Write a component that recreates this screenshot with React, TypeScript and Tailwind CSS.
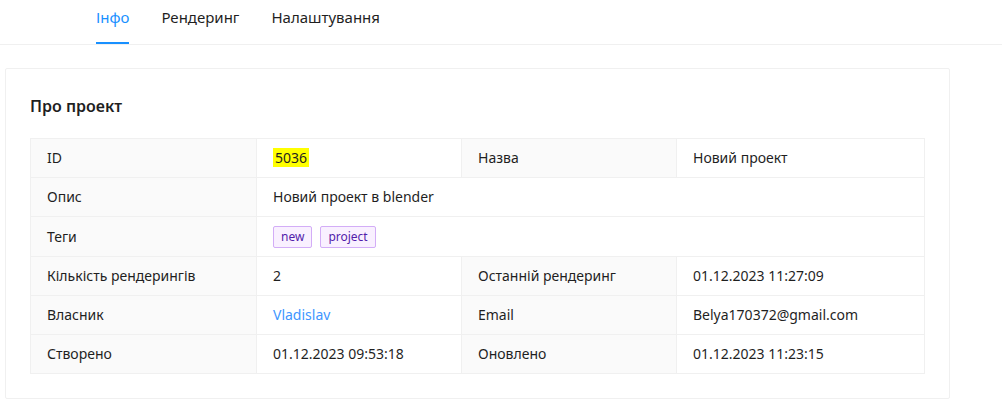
const tabs = ["Інфо", "Рендеринг", "Налаштування"];

function Label({ children }: { children: React.ReactNode }) {
  return (
    <th className="border border-[#f0f0f0] bg-[#fafafa] px-4 py-2 text-left font-normal text-[#1f1f1f] leading-[22px]">
      {children}
    </th>
  );
}

function Value({ children, span }: { children: React.ReactNode; span?: number }) {
  return (
    <td colSpan={span} className="border border-[#f0f0f0] px-4 py-2 text-[#1f1f1f] leading-[22px]">
      {children}
    </td>
  );
}

function Tag({ text }: { text: string }) {
  return (
    <span className="mr-2 inline-block h-[22px] rounded-[2px] border border-[#d3adf7] bg-[#f9f0ff] px-[7px] text-xs leading-5 text-[#531dab]">
      {text}
    </span>
  );
}

export default function App() {
  return (
    <div className="min-h-[410px] bg-white text-sm font-['Noto_Sans',sans-serif] text-[#1f1f1f]">
      <div className="flex gap-8 border-b border-[#f0f0f0] pl-24">
        {tabs.map((t, i) => (
          <div
            key={t}
            className={
              i === 0
                ? "h-[44px] border-b-2 border-[#1890ff] pt-[6px] text-[15px] leading-[22px] text-[#1890ff]"
                : "h-[44px] pt-[6px] text-[15px] leading-[22px] text-[#1f1f1f]"
            }
          >
            {t}
          </div>
        ))}
      </div>

      <div className="ml-[5px] mt-[23px] w-[945px] rounded-[2px] border border-[#f0f0f0] px-6 pt-6 pb-6">
        <h2 className="mb-5 pt-px text-base font-semibold leading-6 text-[#1f1f1f]">Про проект</h2>
        <table className="w-full table-fixed border-collapse border border-[#f0f0f0]">
          <colgroup>
            <col className="w-[226px]" />
            <col className="w-[205px]" />
            <col className="w-[215px]" />
            <col />
          </colgroup>
          <tbody>
            <tr>
              <Label>ID</Label>
              <Value>
                <mark className="bg-[#ffff00] px-0.5 text-[#1f1f1f]">5036</mark>
              </Value>
              <Label>Назва</Label>
              <Value>Новий проект</Value>
            </tr>
            <tr>
              <Label>Опис</Label>
              <Value span={3}>Новий проект в blender</Value>
            </tr>
            <tr>
              <Label>Теги</Label>
              <Value span={3}>
                <Tag text="new" />
                <Tag text="project" />
              </Value>
            </tr>
            <tr>
              <Label>Кількість рендерингів</Label>
              <Value>2</Value>
              <Label>Останній рендеринг</Label>
              <Value>01.12.2023 11:27:09</Value>
            </tr>
            <tr>
              <Label>Власник</Label>
              <Value>
                <a href="#" className="text-[#4096ff]">Vladislav</a>
              </Value>
              <Label>Email</Label>
              <Value>Belya170372@gmail.com</Value>
            </tr>
            <tr>
              <Label>Створено</Label>
              <Value>01.12.2023 09:53:18</Value>
              <Label>Оновлено</Label>
              <Value>01.12.2023 11:23:15</Value>
            </tr>
          </tbody>
        </table>
      </div>
    </div>
  );
}
